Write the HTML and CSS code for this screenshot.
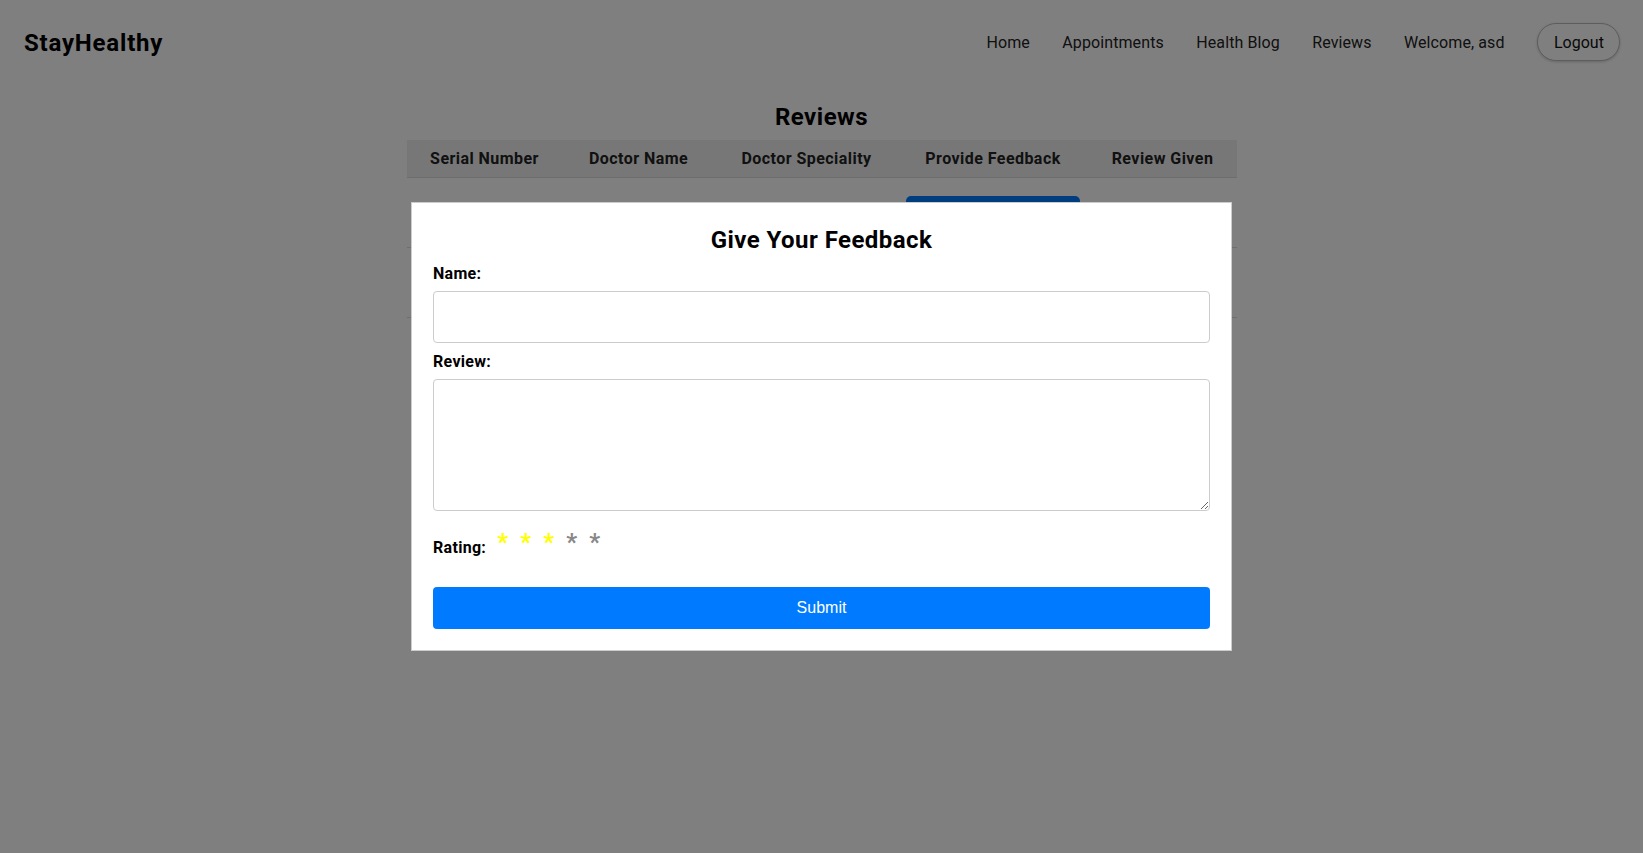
FILE: index.html
```html
<!DOCTYPE html>
<html lang="en">
<head>
<meta charset="utf-8">
<title>StayHealthy - Reviews</title>
<link rel="stylesheet" href="styles.css">
</head>
<body>
<header class="topbar">
  <div class="logo">StayHealthy</div>
  <nav class="nav">
    <a class="nav-link" href="#">Home</a>
    <a class="nav-link" href="#">Appointments</a>
    <a class="nav-link" href="#">Health Blog</a>
    <a class="nav-link" href="#">Reviews</a>
    <span class="nav-link">Welcome, asd</span>
    <button class="logout">Logout</button>
  </nav>
</header>

<main class="reviews">
  <h2 class="reviews-title">Reviews</h2>
  <table class="reviews-table">
    <thead>
      <tr>
        <th class="c1">Serial Number</th>
        <th class="c2">Doctor Name</th>
        <th class="c3">Doctor Speciality</th>
        <th class="c4">Provide Feedback</th>
        <th class="c5">Review Given</th>
      </tr>
    </thead>
    <tbody>
      <tr>
        <td>1</td>
        <td>Dr. John Doe</td>
        <td>Cardiology</td>
        <td><button class="feedback-btn">Click Here</button></td>
        <td></td>
      </tr>
      <tr>
        <td>2</td>
        <td>Dr. Jane Smith</td>
        <td>Dermatology</td>
        <td><button class="feedback-btn">Click Here</button></td>
        <td></td>
      </tr>
    </tbody>
  </table>
</main>

<div class="overlay">
  <div class="modal">
    <h2 class="modal-title">Give Your Feedback</h2>
    <form class="feedback-form">
      <label class="field-label" for="name">Name:</label>
      <input class="text-input" id="name" type="text">
      <label class="field-label" for="review">Review:</label>
      <textarea class="text-area" id="review"></textarea>
      <div class="rating">
        <span class="rating-label">Rating:</span>
        <span class="star on">*</span><span class="star on">*</span><span class="star on">*</span><span class="star">*</span><span class="star">*</span>
      </div>
      <button class="submit" type="button">Submit</button>
    </form>
  </div>
</div>
</body>
</html>
```

FILE: styles.css
```css
* { box-sizing: border-box; }

body {
  margin: 0;
  background: #fff;
  color: #000;
  font-family: Roboto, "Liberation Sans", sans-serif;
}

.topbar {
  height: 84px;
  display: flex;
  align-items: center;
  justify-content: space-between;
  padding: 0 23px 0 24px;
}

.logo {
  font-size: 24px;
  font-weight: 700;
  letter-spacing: 0.8px;
  margin-top: 2px;
}

.nav {
  display: flex;
  align-items: center;
  gap: 32.4px;
}

.nav-link {
  font-size: 16px;
  color: #222;
  text-decoration: none;
  letter-spacing: 0.1px;
}

.logout {
  font-family: inherit;
  font-size: 16px;
  color: #111;
  background: #fff;
  border: 1px solid #bbb;
  border-radius: 20px;
  padding: 8px 16px;
  height: 38px;
  width: 83px;
  box-shadow: 0 1px 3px rgba(0,0,0,0.2);
}

.reviews {
  display: flex;
  flex-direction: column;
  align-items: center;
}

.reviews-title {
  margin: 19px 0 9px;
  font-size: 24px;
  line-height: 28px;
  font-weight: 700;
  letter-spacing: 0.5px;
}

.reviews-table {
  width: 830px;
  border-collapse: collapse;
  margin-left: 1px;
}

.reviews-table th {
  background: #eee;
  font-size: 16px;
  font-weight: 700;
  line-height: 18px;
  padding: 10px 0 9px;
  border-bottom: 1px solid #ddd;
  text-align: center;
  color: #222;
  letter-spacing: 0.45px;
}

.c1 { width: 155px; }
.c2 { width: 153px; }
.c3 { width: 183px; }
.c4 { width: 190px; }
.c5 { width: 149px; }

.reviews-table td {
  height: 70px;
  text-align: center;
  border-bottom: 1px solid #ddd;
  font-size: 16px;
}

.feedback-btn {
  background: #007bff;
  color: #fff;
  border: none;
  border-radius: 5px;
  width: 174px;
  height: 33px;
  font-size: 16px;
}

.overlay {
  position: fixed;
  inset: 0;
  background: rgba(0,0,0,0.5);
  display: flex;
  align-items: center;
  justify-content: center;
}

.modal {
  width: 821px;
  background: #fff;
  border: 1px solid #ccc;
  padding: 23px 21px 21px;
}

.modal-title {
  margin: 0 0 10px;
  text-align: center;
  font-size: 24px;
  line-height: 28px;
  font-weight: 700;
  letter-spacing: 0.45px;
}

.feedback-form {
  display: flex;
  flex-direction: column;
}

.field-label {
  font-size: 16px;
  font-weight: 700;
  line-height: 19px;
  margin-bottom: 8px;
  letter-spacing: 0.3px;
}

.text-input {
  height: 52px;
  border: 1px solid #ccc;
  border-radius: 4px;
  margin-bottom: 9px;
  font-size: 16px;
  padding: 8px;
}

.text-area {
  height: 132px;
  border: 1px solid #ccc;
  border-radius: 4px;
  font-size: 16px;
  padding: 8px;
  resize: vertical;
  margin-bottom: 20px;
}

.rating {
  display: flex;
  align-items: baseline;
  height: 56px;
}

.rating-label {
  font-size: 16px;
  font-weight: 700;
  margin-right: 11px;
  letter-spacing: 0.3px;
}

.star {
  font-size: 24px;
  font-weight: 700;
  color: #888;
  width: 23px;
  position: relative;
  top: -3px;
}

.star.on { color: #ffff00; }

.submit {
  height: 42px;
  background: #007bff;
  color: #fff;
  border: none;
  border-radius: 4px;
  font-family: "Liberation Sans", Arial, sans-serif;
  font-size: 16px;
}
```
